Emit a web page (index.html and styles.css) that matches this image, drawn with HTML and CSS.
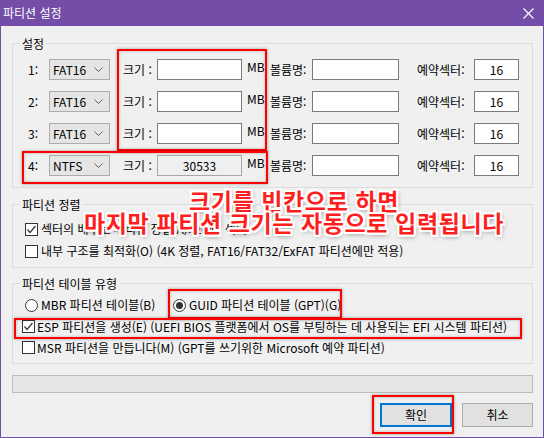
FILE: index.html
```html
<!DOCTYPE html>
<html lang="ko">
<head>
<meta charset="utf-8">
<title>파티션 설정</title>
<link rel="stylesheet" href="styles.css">
</head>
<body>
<div class="window">
  <div class="titlebar">
    <span class="title">파티션 설정</span>
    <svg class="close" width="11" height="11" viewBox="0 0 11 11"><path d="M0.5 0.5 L10.5 10.5 M10.5 0.5 L0.5 10.5" stroke="#fff" stroke-width="1.1" fill="none"/></svg>
  </div>
  <div class="content">
    <div class="group g1">
      <div class="legend">설정</div>
      <div class="rows">
        <div class="prow">
          <span class="num">1:</span>
          <div class="combo"><span>FAT16</span><svg width="9" height="5" viewBox="0 0 9 5"><polyline points="0.5,0.5 4.5,4.5 8.5,0.5" fill="none" stroke="#606060"/></svg></div>
          <span class="lbl-size">크기 :</span>
          <div class="field f-size"></div>
          <span class="mb">MB</span>
          <span class="lbl-vol">볼륨명:</span>
          <div class="field f-vol"></div>
          <span class="lbl-res">예약섹터:</span>
          <div class="field f-res">16</div>
        </div>
        <div class="prow">
          <span class="num">2:</span>
          <div class="combo"><span>FAT16</span><svg width="9" height="5" viewBox="0 0 9 5"><polyline points="0.5,0.5 4.5,4.5 8.5,0.5" fill="none" stroke="#606060"/></svg></div>
          <span class="lbl-size">크기 :</span>
          <div class="field f-size"></div>
          <span class="mb">MB</span>
          <span class="lbl-vol">볼륨명:</span>
          <div class="field f-vol"></div>
          <span class="lbl-res">예약섹터:</span>
          <div class="field f-res">16</div>
        </div>
        <div class="prow">
          <span class="num">3:</span>
          <div class="combo"><span>FAT16</span><svg width="9" height="5" viewBox="0 0 9 5"><polyline points="0.5,0.5 4.5,4.5 8.5,0.5" fill="none" stroke="#606060"/></svg></div>
          <span class="lbl-size">크기 :</span>
          <div class="field f-size"></div>
          <span class="mb">MB</span>
          <span class="lbl-vol">볼륨명:</span>
          <div class="field f-vol"></div>
          <span class="lbl-res">예약섹터:</span>
          <div class="field f-res">16</div>
        </div>
        <div class="prow">
          <span class="num">4:</span>
          <div class="combo"><span>NTFS</span><svg width="9" height="5" viewBox="0 0 9 5"><polyline points="0.5,0.5 4.5,4.5 8.5,0.5" fill="none" stroke="#606060"/></svg></div>
          <span class="lbl-size">크기 :</span>
          <div class="field f-size disabled">30533</div>
          <span class="mb">MB</span>
          <span class="lbl-vol">볼륨명:</span>
          <div class="field f-vol"></div>
          <span class="lbl-res">예약섹터:</span>
          <div class="field f-res">16</div>
        </div>
      </div>
    </div>

    <div class="group g2">
      <div class="legend">파티션 정렬</div>
      <div class="crow first">
        <span class="cbox checked"><svg width="11" height="11" viewBox="0 0 11 11"><polyline points="1.5,5.5 4,8.5 9.5,2" fill="none" stroke="#333" stroke-width="1.2"/></svg></span>
        <span class="ctext">섹터의 배수로 파티션 정렬(A): 2048 섹터</span>
      </div>
      <div class="crow">
        <span class="cbox"></span>
        <span class="ctext">내부 구조를 최적화(O) (4K 정렬, FAT16/FAT32/ExFAT 파티션에만 적용)</span>
      </div>
    </div>

    <div class="group g3">
      <div class="legend">파티션 테이블 유형</div>
      <div class="rrow">
        <div class="ritem mbr"><span class="radio"></span><span class="ctext">MBR 파티션 테이블(B)</span></div>
        <div class="ritem"><span class="radio on"><span class="dot"></span></span><span class="ctext">GUID 파티션 테이블 (GPT)(G)</span></div>
      </div>
      <div class="crow2">
        <span class="cbox checked"><svg width="11" height="11" viewBox="0 0 11 11"><polyline points="1.5,5.5 4,8.5 9.5,2" fill="none" stroke="#333" stroke-width="1.2"/></svg></span>
        <span class="ctext">ESP 파티션을 생성(E) (UEFI BIOS 플랫폼에서 OS를 부팅하는 데 사용되는 EFI 시스템 파티션)</span>
      </div>
      <div class="crow2">
        <span class="cbox"></span>
        <span class="ctext">MSR 파티션을 만듭니다(M) (GPT를 쓰기위한 Microsoft 예약 파티션)</span>
      </div>
    </div>

    <div class="progress"></div>

    <div class="buttons">
      <div class="btn default">확인</div>
      <div class="btn">취소</div>
    </div>
  </div>

  <div class="mark m-size"></div>
  <div class="mark m-row4"></div>
  <div class="mark m-guid"></div>
  <div class="mark m-esp"></div>
  <div class="mark m-ok"></div>

  <div class="caption">
    <div>크기를 빈칸으로 하면</div>
    <div>마지막 파티션 크기는 자동으로 입력됩니다</div>
  </div>
</div>
</body>
</html>
```

FILE: styles.css
```css
* { box-sizing: border-box; }
html, body { margin: 0; padding: 0; }
body {
  width: 544px;
  height: 438px;
  overflow: hidden;
  background: #f0f0f0;
  font-family: "Noto Sans CJK KR", "Noto Sans", sans-serif;
  font-size: 12px;
  line-height: 16px;
  color: #000;
}
.window {
  position: relative;
  width: 544px;
  height: 438px;
  background: #f0f0f0;
  border: 1px solid #744da9;
  border-top: none;
  display: flex;
  flex-direction: column;
}
.titlebar {
  height: 26px;
  flex: none;
  background: #744da9;
  color: #fff;
  display: flex;
  align-items: center;
  justify-content: space-between;
  padding: 0 9px 0 2px;
}
.title { font-size: 12px; line-height: 16px; }
.close { display: block; }

.content {
  padding: 17px 10px 0 11px;
  display: flex;
  flex-direction: column;
}
.group {
  border: 1px solid #dcdcdc;
}
.legend {
  width: fit-content;
  margin: -7px 0 0 7px;
  padding: 0 2px;
  line-height: 14px;
  background: #f0f0f0;
}

/* group 1 */
.g1 { padding-bottom: 11px; }
.rows {
  margin-top: 8px;
  display: flex;
  flex-direction: column;
  gap: 11px;
}
.prow {
  height: 21px;
  display: flex;
  align-items: center;
  padding-left: 15px;
}
.num { width: 21px; }
.combo {
  width: 61px;
  height: 21px;
  background: #e5e5e5;
  border: 1px solid #acacac;
  display: flex;
  align-items: center;
  justify-content: space-between;
  padding: 0 6px 0 3px;
}
.combo svg { display: block; }
.lbl-size { margin-left: 13px; width: 34px; }
.field {
  height: 21px;
  background: #fff;
  border: 1px solid #7a7a7a;
  display: flex;
  align-items: center;
  justify-content: center;
}
.field.disabled { background: #f0f0f0; border-color: #a8a8a8; }
.f-size { width: 85px; }
.mb { margin-left: 5px; width: 23px; align-self: flex-start; line-height: 16px; }
.lbl-vol { width: 42px; }
.f-vol { width: 87px; }
.lbl-res { margin-left: 18px; width: 57px; }
.f-res { width: 45px; }

/* group 2 */
.g2 { margin-top: 16px; padding-bottom: 5px; }
.crow {
  height: 22px;
  display: flex;
  align-items: center;
  padding-left: 12px;
}
.crow.first { margin-top: 6px; }
.cbox {
  width: 13px;
  height: 13px;
  flex: none;
  border: 1px solid #333;
  background: #fff;
  display: flex;
  align-items: center;
  justify-content: center;
}
.cbox svg { display: block; }
.ctext { margin-left: 3px; white-space: nowrap; }

/* group 3 */
.g3 { margin-top: 15px; padding-bottom: 5px; }
.rrow {
  margin-top: 3px;
  height: 22px;
  display: flex;
  align-items: center;
  padding-left: 12px;
}
.ritem { display: flex; align-items: center; }
.ritem.mbr { width: 148px; }
.radio {
  width: 13px;
  height: 13px;
  flex: none;
  border: 1px solid #333;
  border-radius: 50%;
  background: #fff;
  display: flex;
  align-items: center;
  justify-content: center;
}
.dot { width: 7px; height: 7px; border-radius: 50%; background: #333; }
.crow2 {
  height: 21px;
  display: flex;
  align-items: center;
  padding-left: 9px;
}
.crow2 .ctext { margin-left: 2px; }

.progress {
  margin-top: 11px;
  height: 18px;
  background: #e6e6e6;
  border: 1px solid #bcbcbc;
}
.buttons {
  margin-top: 10px;
  display: flex;
  justify-content: flex-end;
  gap: 10px;
}
.btn {
  width: 71px;
  height: 24px;
  background: #e1e1e1;
  border: 1px solid #adadad;
  display: flex;
  align-items: center;
  justify-content: center;
}
.btn.default { width: 72px; border: 2px solid #0078d7; }

/* annotations */
.mark {
  position: absolute;
  border: 2px solid #ff0000;
  box-shadow: 0 0 3px rgba(0,0,0,0.35), inset 0 0 3px rgba(0,0,0,0.25);
}
.m-size { left: 116px; top: 49px; width: 150px; height: 102px; }
.m-row4 { left: 21px; top: 151px; width: 246px; height: 33px; }
.m-guid { left: 167px; top: 289px; width: 174px; height: 30px; }
.m-esp { left: 13px; top: 318px; width: 508px; height: 21px; }
.m-ok { left: 371px; top: 395px; width: 82px; height: 39px; }

.caption {
  position: absolute;
  left: 60px;
  top: 189px;
  width: 466px;
  text-align: center;
  font-family: "Noto Sans CJK KR", sans-serif;
  font-weight: 700;
  font-size: 23px;
  line-height: 22px;
  letter-spacing: 0.6px;
  color: #ff1e1e;
  white-space: nowrap;
  text-shadow:
    -2px -2px 0 #fff, 2px -2px 0 #fff, -2px 2px 0 #fff, 2px 2px 0 #fff,
    0 -2px 0 #fff, 0 2px 0 #fff, -2px 0 0 #fff, 2px 0 0 #fff,
    1px 2px 5px rgba(0,0,0,0.55);
}
```
